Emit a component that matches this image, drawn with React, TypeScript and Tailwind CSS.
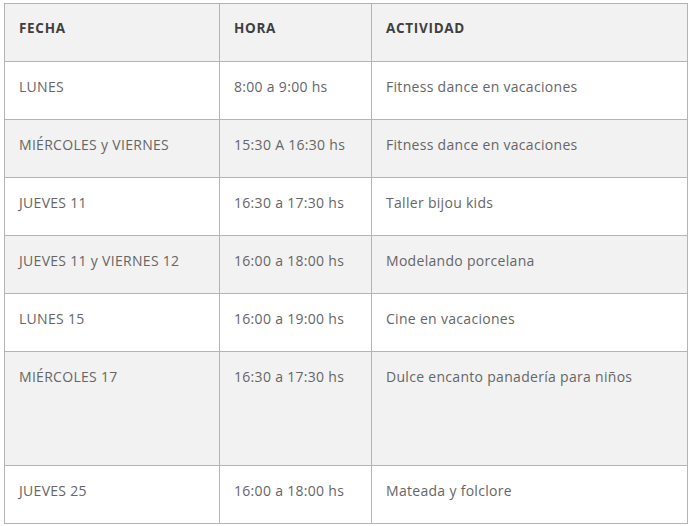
const rows = [
  { fecha: "LUNES", hora: "8:00 a 9:00 hs", actividad: "Fitness dance en vacaciones" },
  { fecha: "MIÉRCOLES y VIERNES", hora: "15:30 A 16:30 hs", actividad: "Fitness dance en vacaciones" },
  { fecha: "JUEVES 11", hora: "16:30 a 17:30 hs", actividad: "Taller bijou kids" },
  { fecha: "JUEVES 11 y VIERNES 12", hora: "16:00 a 18:00 hs", actividad: "Modelando porcelana" },
  { fecha: "LUNES 15", hora: "16:00 a 19:00 hs", actividad: "Cine en vacaciones" },
  { fecha: "MIÉRCOLES 17", hora: "16:30 a 17:30 hs", actividad: "Dulce encanto panadería para niños", tall: true },
  { fecha: "JUEVES 25", hora: "16:00 a 18:00 hs", actividad: "Mateada y folclore" },
];

export default function App() {
  const cell = "border border-[#b4b4b4] pl-[14px] pr-[15px] pt-[14px] align-top text-left";
  return (
    <div className="min-h-screen bg-white pl-[4px] pt-[3px] font-['Open_Sans',sans-serif]">
      <table className="w-[684px] border-collapse table-fixed">
        <colgroup>
          <col className="w-[215px]" />
          <col className="w-[152px]" />
          <col />
        </colgroup>
        <thead>
          <tr className="h-[58px] bg-[#f2f2f2] text-[13.5px] font-bold tracking-[0.7px] text-[#3f3f3f]">
            <th className={cell}>FECHA</th>
            <th className={cell}>HORA</th>
            <th className={cell}>ACTIVIDAD</th>
          </tr>
        </thead>
        <tbody className="text-[14px] tracking-[0.3px] text-[#666]">
          {rows.map((r, i) => (
            <tr
              key={i}
              className={`${r.tall ? "h-[114px]" : "h-[58px]"} ${i % 2 === 0 ? "bg-white" : "bg-[#f2f2f2]"}`}
            >
              <td className={cell}>{r.fecha}</td>
              <td className={cell}>{r.hora}</td>
              <td className={cell}>{r.actividad}</td>
            </tr>
          ))}
        </tbody>
      </table>
    </div>
  );
}
